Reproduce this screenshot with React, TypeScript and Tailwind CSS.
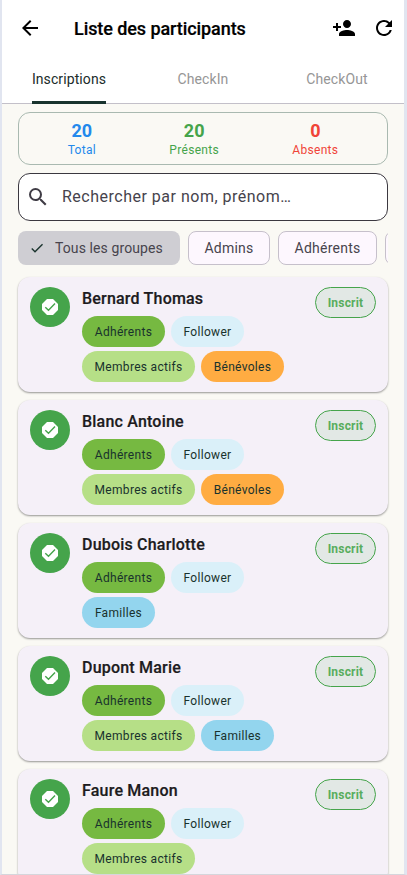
import { useState } from 'react';
import { MdArrowBack, MdCheck, MdPersonAdd, MdRefresh, MdSearch } from 'react-icons/md';

interface Participant {
  name: string;
  groups: string[];
}

const GROUP_STYLES: Record<string, string> = {
  'Adhérents': 'bg-[#76b941] w-[83px]',
  'Follower': 'bg-[#daf0f9] w-[73px]',
  'Membres actifs': 'bg-[#b6df87] w-[113px]',
  'Bénévoles': 'bg-[#ffac42] w-[83px]',
  'Familles': 'bg-[#93d5ee] w-[73px]',
};

const PARTICIPANTS: Participant[] = [
  { name: 'Bernard Thomas', groups: ['Adhérents', 'Follower', 'Membres actifs', 'Bénévoles'] },
  { name: 'Blanc Antoine', groups: ['Adhérents', 'Follower', 'Membres actifs', 'Bénévoles'] },
  { name: 'Dubois Charlotte', groups: ['Adhérents', 'Follower', 'Familles'] },
  { name: 'Dupont Marie', groups: ['Adhérents', 'Follower', 'Membres actifs', 'Familles'] },
  { name: 'Faure Manon', groups: ['Adhérents', 'Follower', 'Membres actifs'] },
];

const TABS = ['Inscriptions', 'CheckIn', 'CheckOut'];

const STATS = [
  { label: 'Total', value: 20, color: 'text-[#2389ec]' },
  { label: 'Présents', value: 20, color: 'text-[#45a44b]' },
  { label: 'Absents', value: 0, color: 'text-[#f04438]' },
];

function VerifiedIcon() {
  return (
    <svg viewBox="0 0 16 16" className="h-4 w-4">
      <path d="M5 0h6l1.5 1.5 2 2L16 5v6l-1.5 1.5-2 2L11 16H5l-1.5-1.5-2-2L0 11V5l1.5-1.5 2-2z" fill="#fff" />
      <path d="M3.3 8.2 6.5 11.3 13 4.6" fill="none" stroke="#45a44b" strokeWidth="1.4" />
    </svg>
  );
}

function ParticipantCard({ participant }: { participant: Participant }) {
  return (
    <article className="flex h-[115px] shrink-0 rounded-xl bg-[#f5f0f8] px-3 pt-2.5 shadow-[0_1px_2px_rgba(0,0,0,0.4)]">
      <div className="flex h-10 w-10 shrink-0 items-center justify-center rounded-full bg-[#45a44b]">
        <VerifiedIcon />
      </div>
      <div className="ml-3 min-w-0 flex-1">
        <h2 className="h-[29px] text-base leading-[23px] font-medium tracking-[0.2px] text-[#1c1b20] [-webkit-text-stroke:0.2px]">
          {participant.name}
        </h2>
        <div className="flex flex-wrap gap-x-1.5 gap-y-1">
          {participant.groups.map((group) => (
            <span
              key={group}
              className={`flex h-[31px] items-center justify-center rounded-full text-xs tracking-[0.3px] whitespace-nowrap text-[#19322d] ${GROUP_STYLES[group]}`}
            >
              {group}
            </span>
          ))}
        </div>
      </div>
      <span className="flex h-[31px] w-[61px] shrink-0 items-center justify-center rounded-full border border-[#45a44b] bg-[#e2e8e5] text-xs font-bold tracking-[0.2px] text-[#58ad5d]">
        Inscrit
      </span>
    </article>
  );
}

function App() {
  const [activeTab, setActiveTab] = useState('Inscriptions');

  return (
    <div className="h-[875px] w-[407px] overflow-hidden border-r-[3px] border-b border-l-2 border-[#e1e5f0] border-b-[#d5d6dc] bg-[#faf9f4] font-[Roboto,sans-serif]">
      {/* App bar */}
      <header className="border-b border-[#c3c0c9] bg-white">
        <div className="flex h-14 items-center pr-2 pl-4">
          <MdArrowBack className="h-6 w-6" />
          <h1 className="ml-8 pt-px text-lg font-medium tracking-[-0.08px] text-black [-webkit-text-stroke:0.2px]">
            Liste des participants
          </h1>
          <div className="ml-auto flex items-center gap-4">
            <MdPersonAdd className="h-6 w-6" />
            <MdRefresh className="h-6 w-6" />
          </div>
        </div>
        <nav className="grid h-[47px] grid-cols-3">
          {TABS.map((tab) => (
            <button
              key={tab}
              onClick={() => setActiveTab(tab)}
              className={`flex justify-center text-sm tracking-[0.1px] ${tab === activeTab ? 'text-[#202c2a]' : 'text-[#969696]'}`}
            >
              <span className={`h-12 pt-[13px] ${tab === activeTab ? 'rounded-t-[2px] border-b-3 border-[#18332e]' : ''}`}>
                {tab}
              </span>
            </button>
          ))}
        </nav>
      </header>

      <main className="pt-2 pr-4 pl-4">
        {/* Counters */}
        <section className="flex h-[53px] justify-around rounded-xl border border-[#a9b9b0] px-3 pt-2">
          {STATS.map((stat) => (
            <div key={stat.label} className={`text-center ${stat.color}`}>
              <p className="text-lg leading-5 font-bold">{stat.value}</p>
              <p className="text-xs leading-[18px] tracking-[0.3px]">{stat.label}</p>
            </div>
          ))}
        </section>

        {/* Search */}
        <label className="mt-2 flex h-12 items-center rounded-xl border border-[#3b3840] bg-white pl-[7px]">
          <MdSearch className="h-6 w-6 shrink-0 text-[#3f3c45]" />
          <input
            placeholder="Rechercher par nom, prénom…"
            className="ml-3 min-w-0 flex-1 text-base tracking-[0.5px] outline-none placeholder:text-[#46434c]"
          />
        </label>

        {/* Group filters */}
        <div className="mt-2.5 flex h-[34px] gap-2 overflow-hidden text-sm tracking-[0.25px] text-[#47444d]">
          <button className="flex w-[162px] shrink-0 items-center rounded-lg bg-[#cfced3] pl-[11px]">
            <MdCheck className="h-4 w-4 text-[#19322d]" />
            <span className="ml-2.5 tracking-[0.1px]">Tous les groupes</span>
          </button>
          <button className="w-[82px] shrink-0 rounded-lg border border-[#c6c0cb] bg-[#fdf7fe]">Admins</button>
          <button className="w-[99px] shrink-0 rounded-lg border border-[#c6c0cb] bg-[#fdf7fe]">Adhérents</button>
          <button className="w-[92px] shrink-0 rounded-lg border border-[#c6c0cb] bg-[#fdf7fe]" />
        </div>

        {/* Participants */}
        <section className="mt-3 flex flex-col gap-2">
          {PARTICIPANTS.map((participant) => (
            <ParticipantCard key={participant.name} participant={participant} />
          ))}
        </section>
      </main>
    </div>
  );
}

export default App;
